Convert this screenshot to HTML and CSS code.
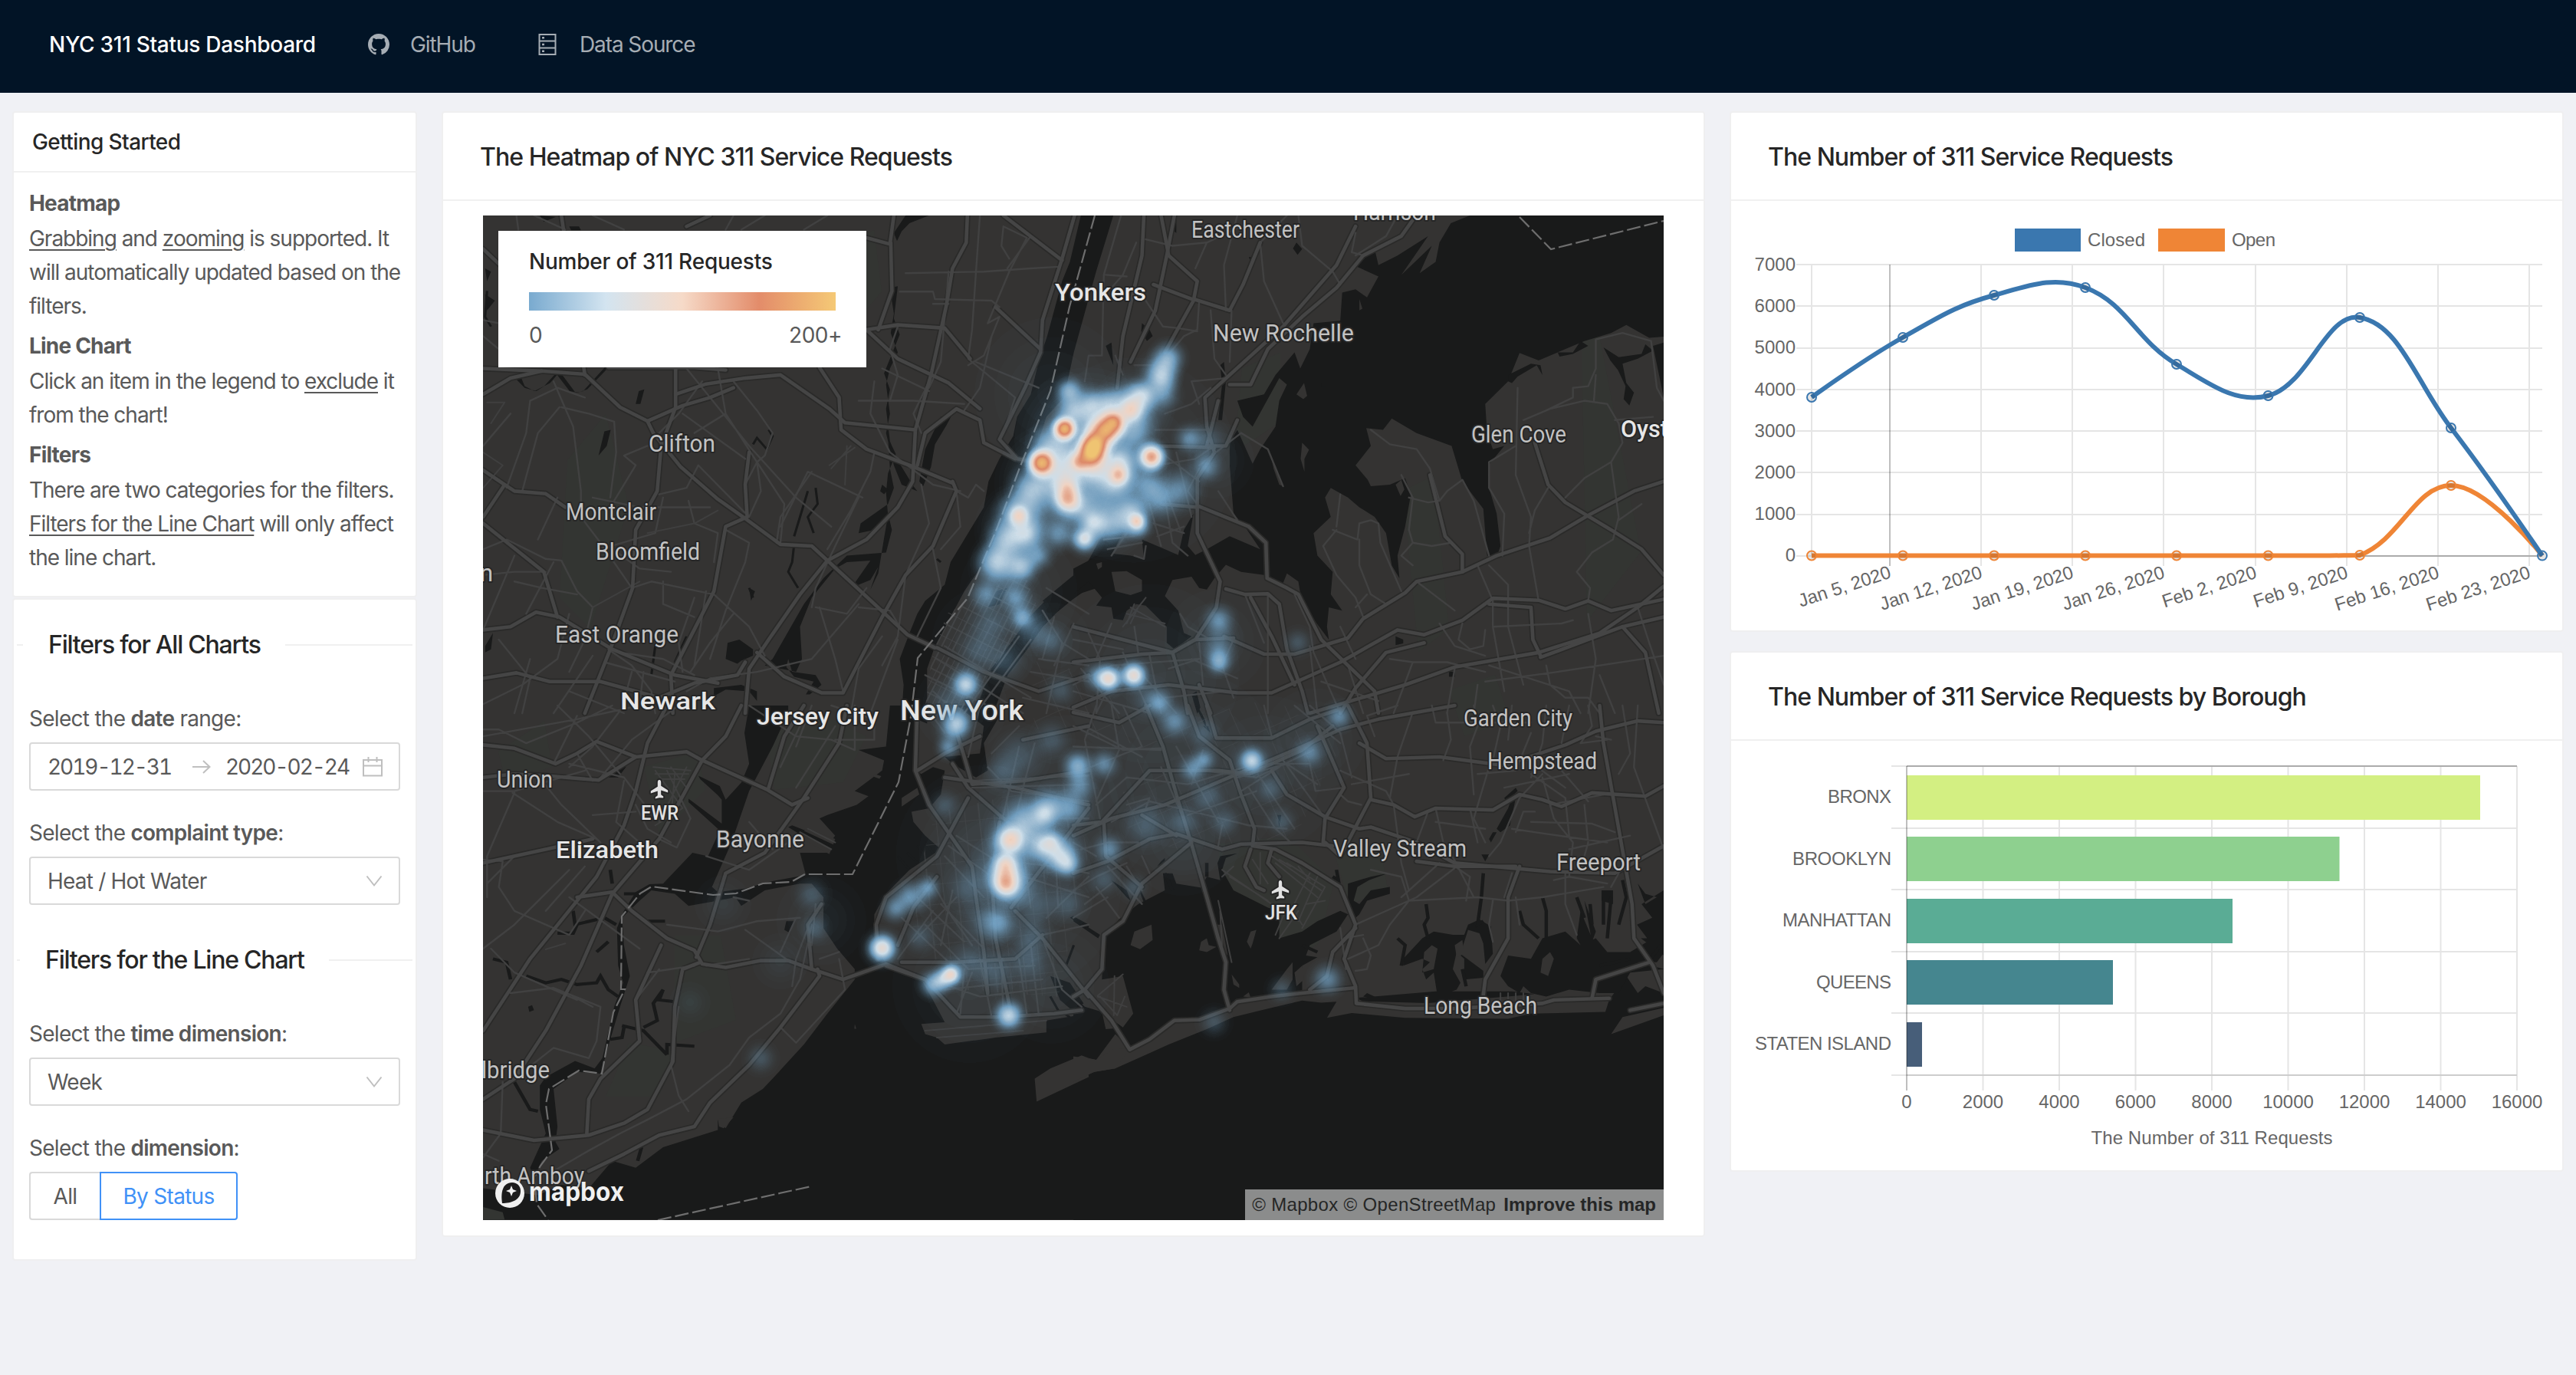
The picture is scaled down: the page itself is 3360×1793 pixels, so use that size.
FILE: index.html
```html
<!DOCTYPE html>
<html lang="en">
<head>
<meta charset="utf-8">
<title>NYC 311 Status Dashboard</title>
<link rel="stylesheet" href="styles.css">
</head>
<body>
<header class="topbar">
  <div class="brand">NYC 311 Status Dashboard</div>
  <a class="nav nav-github"><svg width="28" height="28" viewBox="0 0 16 16"><path fill="currentColor" d="M8 0C3.58 0 0 3.58 0 8c0 3.54 2.29 6.53 5.47 7.59.4.07.55-.17.55-.38 0-.19-.01-.82-.01-1.49-2.01.37-2.53-.49-2.69-.94-.09-.23-.48-.94-.82-1.13-.28-.15-.68-.52-.01-.53.63-.01 1.08.58 1.23.82.72 1.21 1.87.87 2.33.66.07-.52.28-.87.51-1.07-1.78-.2-3.64-.89-3.64-3.95 0-.87.31-1.59.82-2.15-.08-.2-.36-1.02.08-2.12 0 0 .67-.21 2.2.82.64-.18 1.32-.27 2-.27s1.36.09 2 .27c1.53-1.04 2.2-.82 2.2-.82.44 1.1.16 1.92.08 2.12.51.56.82 1.27.82 2.15 0 3.07-1.87 3.75-3.65 3.95.29.25.54.73.54 1.48 0 1.07-.01 1.93-.01 2.2 0 .21.15.46.55.38A8.01 8.01 0 0 0 16 8c0-4.42-3.58-8-8-8z"/></svg><span>GitHub</span></a>
  <a class="nav nav-data"><svg width="24" height="28" viewBox="0 0 24 28" fill="none" stroke="currentColor" stroke-width="2"><path d="M1.5 1h21v26h-21zM1.5 9.5h21M1.5 18.5h21"/><path d="M5 5.3h3M5 14h3M5 22.7h3" stroke-width="2.6"/></svg><span>Data Source</span></a>
</header>

<main class="board">
  <aside class="side">
    <section class="card intro">
      <h3 class="small-head">Getting Started</h3>
      <div class="intro-body">
        <h4>Heatmap</h4>
        <p><u>Grabbing</u> and <u>zooming</u> is supported. It<br>will automatically updated based on the<br>filters.</p>
        <h4>Line Chart</h4>
        <p>Click an item in the legend to <u>exclude</u> it<br>from the chart!</p>
        <h4>Filters</h4>
        <p>There are two categories for the filters.<br><u>Filters for the Line Chart</u> will only affect<br>the line chart.</p>
      </div>
    </section>
    <section class="card filters">
      <div class="divider divider-all"><span>Filters for All Charts</span></div>
      <label>Select the <b>date</b> range:</label>
      <div class="field dates"><span>2019-12-31</span>
        <svg width="24" height="20" viewBox="0 0 24 20" fill="none" stroke="#bfbfbf" stroke-width="2"><path d="M0 10h22M14 2l8.500 8-8.500 8"/></svg>
        <span>2020-02-24</span>
        <svg class="cal" width="26" height="26" viewBox="0 0 26 26" fill="none" stroke="#bfbfbf" stroke-width="2"><path d="M1 4h24v20.500H1zM1 11.500h24M7.500 0v7M18.500 0v7"/></svg>
      </div>
      <label>Select the <b>complaint type</b>:</label>
      <div class="field"><span>Heat / Hot Water</span><svg width="22" height="16" viewBox="0 0 22 16" fill="none" stroke="#bfbfbf" stroke-width="2"><path d="M1.500 1.500l9.500 12 9.500-12"/></svg></div>
      <div class="divider divider-line"><span>Filters for the Line Chart</span></div>
      <label>Select the <b>time dimension</b>:</label>
      <div class="field"><span>Week</span><svg width="22" height="16" viewBox="0 0 22 16" fill="none" stroke="#bfbfbf" stroke-width="2"><path d="M1.500 1.500l9.500 12 9.500-12"/></svg></div>
      <label>Select the <b>dimension</b>:</label>
      <div class="toggle"><button class="opt">All</button><button class="opt on">By Status</button></div>
    </section>
  </aside>

  <section class="card map-card">
    <h2 class="head">The Heatmap of NYC 311 Service Requests</h2>
    <div class="map">
      <svg class="map-svg" viewBox="630 281 1540 1310" width="1540" height="1310">
        <defs>
          <radialGradient id="spot"><stop offset="0" stop-color="#fff" stop-opacity="1"/><stop offset=".2" stop-color="#fff" stop-opacity=".86"/><stop offset=".4" stop-color="#fff" stop-opacity=".56"/><stop offset=".6" stop-color="#fff" stop-opacity=".27"/><stop offset=".8" stop-color="#fff" stop-opacity=".08"/><stop offset="1" stop-color="#fff" stop-opacity="0"/></radialGradient>
          <filter id="ramp" filterUnits="userSpaceOnUse" x="630" y="281" width="1540" height="1310" color-interpolation-filters="sRGB">
            <feColorMatrix values="0 0 0 1 0  0 0 0 1 0  0 0 0 1 0  0 0 0 1 0"/>
            <feComponentTransfer>
              <feFuncR type="table" tableValues=".42 .47 .83 .965 .89 .965 .965"/>
              <feFuncG type="table" tableValues=".62 .67 .895 .855 .55 .79 .79"/>
              <feFuncB type="table" tableValues=".75 .82 .94 .79 .42 .46 .46"/>
              <feFuncA type="table" tableValues="0 .9 1 1 1 1 1"/>
            </feComponentTransfer>
          </filter>
          <pattern id="grid1" width="15" height="30" patternUnits="userSpaceOnUse" patternTransform="rotate(27)"><path class="cell" d="M0 0V30M7 0V30M0 0H15M0 15H15"/></pattern>
          <pattern id="grid2" width="38" height="26" patternUnits="userSpaceOnUse" patternTransform="rotate(-6)"><path class="cell" d="M0 0V26M19 0V26M0 0H38"/></pattern>
          <pattern id="grid3" width="34" height="44" patternUnits="userSpaceOnUse" patternTransform="rotate(-24)"><path class="cell" d="M0 0V44M0 0H34"/></pattern>
          <path id="plane" d="M0-11c1.600 0 2.200 1.600 2.200 3.200v4.600l9 5.800v2.800l-9-2.800v5.600l3 2.400v2L0 12.200l-5.200 1.400v-2l3-2.400V3.600l-9 2.800V3.600l9-5.800v-5.600C-2.200-9.400-1.600-11 0-11z"/>

          <g id="major">
            <g transform="translate(620 270) scale(.5102 .42092)">
              <path d="M20 580L90 530 170 508 280 518 370 620 440 663 530 615 600 590 660 560"/>
              <path d="M512 497V620L475 740 465 880 410 1000 402 1180 345 1370 280 1568"/>
              <path d="M440 663L455 700 525 805 620 905 690 965 780 1045 860 1050 985 1190 1105 1325 1175 1365"/>
              <path d="M880 497L930 590 935 690 1000 750 1110 800 1220 855"/>
              <path d="M690 1568L700 1430 750 1340 830 1200 900 1095 1000 1030 1080 930 1118 850 1125 690 1165 520 1205 300 1220 190 1255 110 1258 26"/>
              <path d="M280 520L220 26M20 130L90 210M512 580L590 548 690 530 780 520 905 625 945 668 1125 690"/>
              <path d="M20 1460L105 1443 190 1470 320 1470 470 1520 560 1475 670 1450 690 1410"/>
              <path d="M20 1310L90 1300 155 1255 215 1270 350 1370 510 1450 620 1475"/>
              <path d="M210 1270L175 1130 20 980M75 860L20 960M20 815L75 860 100 880 180 888 230 930"/>
              <path d="M700 760L690 860 695 960 640 990 610 1190 500 1450 505 1568"/>
              <path d="M1532 26L1500 160 1450 350 1445 450 1405 560 1340 720 1385 780 1430 790M1130 800L1150 700 1230 625 1290 660 1300 730 1380 780"/>
              <path d="M720 1380L790 1455 885 1505 940 1505 1040 1270 1100 1140 1170 1050 1230 880 1220 850M1000 380L1080 470 1210 545 1290 625M1000 380L1080 365 1200 375 1265 470"/>
              <path d="M1350 26L1500 165M1330 310L1445 440M1000 95L1060 115 1070 26M1062 110L1065 260 1030 380"/>
              <path d="M540 60L600 26M340 497L560 497 640 505M20 500L170 508M1180 1365L1300 1440 1440 1500 1568 1450"/>
            </g>
            <g transform="translate(1400 270) scale(.49745 .42092)">
              <path d="M185 26L180 150 130 400 115 560M265 26L245 150 215 320 150 480"/>
              <path d="M230 26L250 150 325 230 315 290 240 450M315 285L410 320 445 240 490 110"/>
              <path d="M210 240L310 285M740 60L690 180 550 370 410 520 345 590 350 680 370 760 325 840 325 1010 385 1160 375 1240 320 1340 260 1380 0 1300"/>
              <path d="M890 40L860 90 760 150 690 250 600 340 510 440 465 550 410 550M380 600L350 740 400 740 430 660"/>
              <path d="M220 740L370 745M325 930L230 920M325 925L460 990 505 1040 508 1150 560 1180 590 1200 650 1340 790 1500 800 1568"/>
              <path d="M400 1183L450 1200 510 1198 540 1230 560 1370 600 1500 615 1568M465 1210L520 1330 580 1480M395 1330L500 1385 580 1385 720 1335 760 1275 870 1195 900 1160 1020 1130 1110 1080 1250 1025 1350 955 1470 880 1548 850"/>
              <path d="M0 1410L180 1385 260 1380 320 1340 420 1335M260 1380L290 1500 300 1568M0 1550L100 1500 250 1480 430 1505 520 1505 700 1410 850 1310 920 1325 1020 1280 1100 1212 1220 1218 1290 1245 1350 1220 1410 1250 1548 1215"/>
              <path d="M1090 1230L1200 1240 1205 1340 1225 1390M620 1568L870 1480 1000 1425 1220 1380 1380 1320 1480 1240 1548 1175M1225 1395L1440 1300 1548 1270"/>
              <path d="M935 830L975 1020 1020 1075V1130M1210 730L1245 860 1290 915 1410 1000 1490 1060 1548 1140M1440 1300L1500 1380 1535 1568"/>
              <path d="M330 1480L360 1568M700 1568L740 1490 820 1380 920 1350"/>
            </g>
            <g transform="translate(620 920) scale(.5102 .44643)">
              <path d="M20 115L100 125 205 170 260 140 310 105 410 150 540 135 580 160 745 245 810 290 850 270"/>
              <path d="M680 0L640 90 580 160 470 390 350 550 270 760 180 950 100 1090 20 1150"/>
              <path d="M490 0L440 110 410 250 380 350 310 500 140 740 20 950"/>
              <path d="M20 210L100 200 180 205 315 218 410 150M20 460L200 415 300 390"/>
              <path d="M260 560L350 545 400 600 490 680 560 715 580 755 640 765 730 745 800 745 860 770 940 800 1050 755 1150 800"/>
              <path d="M640 490L600 640 565 735M640 490L740 430 840 270 930 110 950 0M840 0L790 90 750 240"/>
              <path d="M475 700L410 860 420 980 320 1090 290 1150 285 1250M575 750L530 770 510 880 505 1040 440 1180 380 1220 290 1255 150 1270 20 1240"/>
              <path d="M290 1360L380 1310 470 1255 560 1230 600 1160 700 1050 780 940 860 820 880 790 875 770"/>
              <path d="M860 770L850 640 885 580"/>
              <path d="M1130 0L1125 190 1160 290 1270 470 1280 560 1300 720 1310 840M1130 190L1200 140 1290 90"/>
              <path d="M1220 170L1260 240 1340 320 1450 420M1210 0L1250 150 1270 230 1400 220 1568 190M1260 270L1180 440 1050 560 1025 640 1030 740"/>
              <path d="M1180 500L1120 590 1080 700M1340 340L1320 500 1330 680 1370 900M1050 760L1150 800 1240 910 1340 910 1480 900 1550 890M1380 600L1450 680 1568 850M1200 210L1380 240 1568 290M1400 100L1568 60"/>
              <path d="M1090 750L1230 750 1380 740 1450 670M1370 590L1568 300"/>
            </g>
            <g transform="translate(1400 920) scale(.49745 .44643)">
              <path d="M0 380L100 330 240 290 430 200 600 120 700 70 800 40 1000 0"/>
              <path d="M190 0L235 120 270 260 310 405 350 560 380 680 400 750 395 830 410 890"/>
              <path d="M300 0L330 90 410 160 440 260 475 360 470 410M350 0L375 95 520 95 620 40 700 10"/>
              <path d="M0 350L75 340 200 190 380 190 460 200 600 130 680 60"/>
              <path d="M0 490L90 455 200 390 270 375 390 420 440 405 600 400 680 410M270 380L180 320M310 400L180 520 130 630 80 670 75 770 30 830 0 850"/>
              <path d="M720 0L770 110 780 270 700 440 660 400M640 60L710 240 660 330 655 400M520 190L560 260 660 325 750 360 780 355 900 400 1000 460 1250 485 1420 490 1548 410"/>
              <path d="M750 110L820 155 960 150 1130 175 1290 115 1370 75 1480 45 1548 50M780 275L840 290 895 325 950 300 1100 305 1170 260 1230 275 1280 295 1360 255 1500 265 1548 235"/>
              <path d="M1380 0L1390 110 1430 360 1465 580 1470 680 1520 760 1548 840M1170 470L1140 560V680L1080 800 1075 845M900 455L1000 470 1160 470"/>
              <path d="M470 410L530 420 600 460 700 530 740 640 710 740 740 820 742 870 870 885 1000 885 1230 870 1260 860 1405 855"/>
              <path d="M465 420L450 470 480 530 500 540M520 420L510 460 540 500M30 830L100 920 148 1005 200 975 265 920 330 918 410 885 430 865 520 850 600 840 735 825M620 830L665 790 680 720 740 650"/>
              <path d="M1360 855L1370 800 1510 750M1460 890L1548 870M80 340L85 440 180 530M0 20L120 50 200 0"/>
            </g>
          </g>

          <g id="minor">
            <g transform="translate(620 270) scale(.5102 .42092)">
              <path d="M105 26L110 70M150 26L230 70M300 26L380 70M660 26L640 70M740 26L680 70M840 70L900 26M20 350L60 360M20 400L60 440M220 620L290 640 355 665 360 760 345 900M90 640L20 740M140 600L210 560 280 590M140 600L130 700 80 870M215 620L160 700 120 880M200 540L250 680 270 880 270 960 320 1040 400 1180"/>
              <path d="M540 500L600 590 700 740 820 900 910 990M580 540L520 640 470 700M530 640L690 780M620 500L640 640 720 790 730 880 700 960M660 540L720 630 760 700 740 770 720 790M640 640L560 700M570 800L540 870 470 890M570 800L700 960M690 860L720 790 790 920 780 1040M860 820L780 960 770 1040M440 740L380 770 410 800 350 920M300 900L420 930 600 930M545 910L560 980 620 1010 610 1100"/>
              <path d="M20 1060L80 1030 180 1090 220 1095 260 1190 300 1240 280 1340 240 1440M100 1080L20 1310M200 1100L130 1260M160 1030L210 900M340 1050L420 1120 500 1130M480 1160L480 1230 560 1270M20 1140L100 1130 180 1130M100 1160L170 1180 260 1200M320 1060L460 1010 480 900M400 1180L450 1160 610 1200 700 1300 740 1390M560 1210L520 1350 530 1440M590 1190L560 1420M640 1000L700 1040 690 1100 640 1250 600 1400M660 1260L600 1350 550 1440"/>
              <path d="M340 1370L400 1420 450 1500 460 1568M370 1380L480 1400 560 1450M330 1410L510 1470M400 1440L380 1530M430 1440L420 1540M300 1390L200 1568M240 1500L380 1568M60 1340L140 1460 120 1568M20 1540L120 1480 210 1400 240 1260M140 1400L100 1568M540 1500L600 1460 720 1440 860 1400 980 1230M860 1240L870 1180 920 1050 980 900M870 1240L950 1260 1000 1180M900 1060L960 940 1010 820 1020 760M990 900L850 820 780 990M1020 540L1010 640 1060 760 1170 860 1240 880M1040 500L1160 570M980 600L1120 600 1250 610M1160 540L1120 640 1140 700"/>
              <path d="M1100 205L1300 200 1420 190 1490 185M1085 262L1170 262 1175 285 1320 290 1340 310M1170 300L1210 300M1210 200L1190 480 1160 560M1290 26L1280 200 1270 380 1260 470 1380 590 1350 700M1080 370L1060 440 1080 520 1060 600M1320 400L1290 560 1250 630M1365 160L1345 120 1350 60 1410 95 1365 200 1310 360 1340 340 1300 460 1260 490M1420 90L1360 190M1280 480L1440 560M1230 880L1260 900 1280 860 1300 880M1140 860L1160 980 1100 1140 1080 1330 1040 1420M1170 1060L1190 1180 1130 1330M1080 1340L1010 1568M1040 1330L980 1430 960 1568M980 1240L1060 1250 1080 1290M880 1240L920 1400 940 1500M1230 880L1240 990 1190 1060"/>
              <path class="dim" d="M20 870L70 800 20 760M960 740L910 810M950 740L945 860M970 745L905 800M30 605L75 605 40 670M440 1010L560 980 620 940M300 1240L420 1160"/>
              <path d="M1180 1400L1400 1568M1200 1360L1420 1520M1150 1450L1350 1568M1170 1500L1230 1568M1390 1330L1250 1568M1420 1340L1280 1568M1450 1250L1500 1350 1568 1400M1440 1400L1568 1420M1420 1440L1568 1470M1480 1270L1450 1400M1530 1290L1480 1420M1460 1180L1568 1260M1500 1350L1460 1568M1400 1520L1568 1568"/>
            </g>
            <g transform="translate(1400 270) scale(.49745 .42092)">
              <path d="M125 26L80 210 75 460M165 110L130 210 100 250M350 110L320 190M430 26L395 180 400 320M560 26L490 110 500 230 550 360M590 26L600 120 680 200 700 240M850 26L820 90 740 150M740 80L730 140 760 150M190 290L235 370 275 375 325 385M160 490L215 490 220 470M75 460L40 460 30 540M110 460L130 520M330 290L325 380 290 400 240 470M360 320L370 470 400 520M415 320L410 480M440 60L350 110 260 120 190 100M85 210L140 215"/>
              <path d="M310 540L400 530M310 540L330 610M240 640L310 610 360 560M215 690H360M230 760L330 850M220 800L320 780 370 740M240 870L280 1000M270 760L310 960M330 800L440 700 510 750 550 865M330 810L300 880 330 930M380 880L430 970M80 1030L160 1020M90 1060L180 1040M100 1080L140 1010M200 920L230 1050M240 900L260 1040 300 1080M210 980L290 1010M220 1020L290 990M160 1080L185 1090 190 1050"/>
              <path d="M780 690L830 735 900 750 935 810 960 910M880 900L930 915 960 910 980 880 1020 845 1050 910 1090 1080M860 830L890 900 880 1000 890 1040 860 1080 890 1110M680 1000L745 1030 750 980 780 970 800 980 805 1040 860 1190M690 1000L655 1050 690 1140 740 1210 760 1270M750 1030L750 1110 780 1200 820 1230M700 890L690 990M890 1040L940 1050 990 1040M770 1200L740 1240"/>
              <path d="M1090 790L1090 870 1130 950 1125 1080M1160 740L1090 790M1165 560L1160 830 1200 960 1195 1050 1220 1220M1180 660L1250 625 1340 600 1400 610 1430 670 1440 730 1410 790 1340 840 1290 900M1240 630L1310 590 1310 560 1350 555 1370 500 1370 410 1440 390 1515 415M1245 870L1210 940 1195 1010M1410 790L1430 960 1415 1030 1360 1070 1320 1130 1355 1180 1350 1220M1430 970L1490 920M1515 415L1530 560 1548 600M1370 520L1365 600M1420 660L1520 650"/>
              <path d="M1060 1110L1100 1220 1100 1300 1130 1500M1090 1110L1140 1170 1140 1300 1180 1480M900 1160L1000 1250M1020 1290L1010 1340 1040 1370 1075 1360 1080 1310M1100 1300L1280 1290 1310 1280M830 1400L890 1410 980 1410 1080 1440M890 1410L840 1568M1000 1430L980 1568M1060 1480L1050 1568M1090 1420L1300 1500 1330 1568M1080 1470L1270 1440 1548 1390M1350 1260L1370 1400 1350 1568M1380 1450L1420 1568M1480 1240L1510 1350 1548 1480M1240 1420L1250 1480 1290 1520 1350 1520 1380 1568M700 1300L740 1400M620 1360L640 1568M580 1200L620 1300 630 1380 700 1568M510 1200V1568M450 1200L500 1350M720 1420L760 1568M650 1470L800 1530M960 1290L1000 1360 1080 1390"/>
              <path d="M0 1340L130 1370M40 1320L70 1400 60 1568M100 1290L60 1400M130 1380L200 1568M160 1300L170 1380M0 1480L100 1420 330 1400M20 1430L120 1568M120 1420L60 1568M160 1420L270 1568M200 1390L230 1568M330 1350L340 1480M280 1260L300 1300 360 1340M310 1400L430 1460M420 1340L390 1420 420 1520M0 1500L200 1568M250 1430L330 1400M240 1520L400 1500"/>
              <path class="dim" d="M130 1300L190 1210M150 1240L240 1300M140 1260L240 1290M160 1230L140 1290M170 1240L150 1290"/>
            </g>
            <g transform="translate(620 920) scale(.5102 .44643)">
              <path d="M20 70L60 70 130 110 260 50 350 0M20 90L260 40 420 0M210 0L290 90 370 200M200 170L260 30M260 140L300 220M20 250L100 250 280 190M100 255L30 440 30 560M95 255L210 340 310 390M160 205L220 290 320 400M315 218L400 100 520 0M240 170L380 210 440 300M380 220L360 340 420 400M410 290L440 360 500 400M300 320L410 310M380 0L300 120 240 180M520 260L550 330 515 415 470 390M20 450L70 455 60 530 100 600 240 670M30 520L100 440M280 470L180 600M280 600L240 670M240 560L420 710M20 710L100 640 240 480M40 710L100 780 260 860M90 840L200 825 320 880 310 980 290 1030 200 1000 100 1090M250 850L300 880M70 1100L65 1250 20 1320M20 1310L60 1330"/>
              <path d="M490 640L620 660 720 630 830 620M660 560L700 570M690 655L770 720 800 745M820 620L780 720M440 780L560 760M410 860L470 770M590 760L700 740M860 640L830 800 780 900 700 970 650 1050 540 1150 440 1210 370 1250 290 1300 200 1360M850 650L820 740 810 820M880 740L930 720M930 740L945 830 820 985 780 940M870 580L860 700M520 880L500 1050 520 1140 545 1185"/>
              <path d="M700 0L820 90 910 100 970 130 970 0M830 60L780 180M860 0L820 120M920 60L820 240M910 0L1020 40 1020 100 920 100M590 440L700 480 800 400M700 340L760 420"/>
              <path d="M1150 0L1200 80M1290 0L1260 150M1320 140L1390 60M1310 180L1370 250 1568 280M1260 220L1568 205M1270 240L1568 230M1340 330L1568 330M1210 410L1370 540M1230 380L1340 460M1200 440L1300 560M1160 500L1220 620 1270 700M1130 560L1250 690M1120 690L1230 560M1080 740L1170 600M1090 620L1220 760M1150 640L1260 770 1430 760M1190 580L1300 710M1220 540L1190 700M1160 800L1290 850 1500 820M1200 830L1450 800M1250 770L1240 900M1230 900L1270 780M1290 740L1320 910M1345 740L1350 910M1390 740L1410 900M1420 700L1440 900M1450 680L1500 830 1550 880M1400 460L1480 470 1568 490M1460 620L1568 500M1350 480L1568 560M1390 330L1420 590M1360 330L1380 560M1480 360L1490 590M1568 640L1450 670M1390 120L1350 320M1430 110L1380 330"/>
              <path class="dim" d="M455 180L550 190M460 190L530 300 460 350M490 190L520 260M510 200L500 330M500 180L540 240M540 180L470 340M180 712L230 695M460 200H545M475 215H535M1150 950L1460 920M1180 970L1400 950M850 360L920 400M830 370L910 420"/>
            </g>
            <g transform="translate(1400 920) scale(.49745 .44643)">
              <path d="M0 60L130 130 230 125M0 120L230 130M60 0L30 100 70 330M100 0L120 130 60 280M130 0L180 120 0 200M30 60L180 150M60 290L140 210 300 230 480 170M100 340L200 280 350 320 460 350 560 360M300 320L480 250M140 290L200 270 190 300M230 180L300 360M270 120L380 340M340 130L310 230M340 190L480 210 630 130M390 350L380 410M430 210L560 170 640 230M440 250L540 180M460 240L530 360 570 400M490 210L580 360M550 160L660 330M480 170L620 170 635 250 710 240M700 190L820 250 840 290M620 0L700 80 730 210M730 230L880 200M790 90L770 30 850 0M700 260L720 280 755 290M500 0L520 90M580 0L700 110"/>
              <path d="M890 20L850 150 830 270M940 0L950 50 1010 50M980 20L990 100 970 160M1050 0L1060 60 1040 120 1050 260M1100 0L1120 60 1100 160M1150 0L1140 100M1010 50L1200 50M1060 200L1160 190 1200 80M1090 180L1050 330 1080 400M1230 200L1170 270 1120 400 1090 440M1200 200L1290 270 1300 380M1280 190L1350 280M1230 210L1260 330 1310 400 1300 500M1240 0L1230 110 1200 210M1300 0L1280 110M1350 0L1360 60 1330 110 1400 100M1370 90L1410 100M1180 150L1290 240M1440 0L1460 140 1430 200M1480 0L1470 180 1548 420M1150 360L1240 375 1400 400M1160 370L1180 310 1210 310M1340 290L1350 400 1330 480M1080 360L950 340M950 300L970 400 1010 470M930 310L900 400M840 290L860 460 880 540M1040 300L1060 400M1200 340L1360 345 1420 370M1250 290L1390 260M1300 420L1460 380M1130 240L1300 200"/>
              <path d="M780 480L820 490 860 500 880 570 830 640 800 700 720 740M1000 475L900 560 740 640M960 460L860 560M1000 470L1040 500 1030 570M1010 475L1050 560M1150 490L1130 560M880 570L1060 560 1140 570 1230 560 1390 530M1290 490V580L1320 670M1430 490L1410 530M1160 560L1170 640M1100 570L1090 640 1100 690M1260 510L1300 500 1400 520M700 650L715 770M760 680L780 730 770 770 740 775M710 680L760 670"/>
              <path d="M0 540L60 500 140 460M30 580L100 520M90 470L180 580M60 530L120 620M140 470L180 540M0 620L90 560M0 400L60 440M20 420L90 400 170 400M180 440L200 490"/>
              <path class="dim" d="M390 480L520 580M410 500L510 570M520 440L650 540M530 460L640 560M540 450L570 470M560 460L660 530 600 650M590 470L620 510M640 500L590 630M620 490L570 600M610 580L660 570M570 590L600 640M590 600L540 680M560 590L530 670M420 470L390 500M470 450L510 520M490 430V520M64 848L130 785M108 790L106 905M64 850L140 880M70 850L115 905 135 850M380 570L415 750M385 600L390 700M1120 840V870M1140 840V870M1160 840V870M1180 840V870"/>
            </g>
          </g>
        </defs>

        <rect class="land" x="630" y="281" width="1540" height="1310"/>
        <g class="park">
          <path d="M740 600l50-60 30 120-50 160-40-40zM1080 330l60-30 10 80-50 60zM1620 480l50-20 0 90-60 40zM1830 640l40-20 20 200-40 30zM1590 1100l90-10 60 60-20 80-60 40-70-60zM880 1220l60 0 20 110-80 30zM1000 960l70-30 60 30-30 60-90 10zM840 1000l70-20 10 50-60 60zM2060 300l80 420-70 90zM1740 1110l60-10 10 60-50 20zM1890 900l60-20 20 60-60 20zM650 980l60-40 10 60-60 20zM820 1360l60 10-20 60-70 0z"/>
        </g>

        <g class="water">
          <g transform="translate(620 270) scale(.5102 .42092)">
            <path d="M1548 26L1520 170 1500 230 1462 400 1440 480 1420 580 1385 650 1375 710 1340 780 1312 850 1300 930 1250 1030 1215 1100 1200 1170 1150 1220 1130 1260 1110 1320 1085 1400 1095 1480 1090 1568 1155 1600 1155 1430 1175 1360 1215 1270 1250 1190 1290 1120 1340 1000 1380 900 1425 780 1460 650 1505 590 1530 450 1587 200 1631 26z"/>
            <path d="M1090 75L1110 50 1160 26 1100 26 1070 80 1078 105zM410 610l8-40 14-5-10 45zM315 770l15-75 16-5-10 50zM116 525l10 30 25 15 40-25 25-35 40 65 20-5 60-80 10 0-60 75-25 10-20-5-35-55-30 40-20 15-30-10-20-25zM1060 250l10 80-8 60 18 60-20 50-10 50 10 90-10 60 20 100 20 60 40 20-10-15-40-80-20-60-10-100 10-60-15-50 20-60 20-60-15-50 10-100zM1220 640l-30 10-40 100-15 100 10 15 20-60 10-70 30-60zM1060 810l10 60-15 50-70 60-5 30 40-10 35-50 10 50-15 70-100 10-60 70-50 80-80 170-20 20 80 20 15-40-5-100 30-90 60-90 30-20 60-5-40 70 0 10 40-20 20-40-20 70 20-50 15-110 10-70-5-70 5-60 20-60-20-50zM645 1350l30-10 35 30 0 20-30 15-10 10-30-15zM800 1400l10 40 60 10 15 30-30 30-10 0 20-40-50-15-20-30zM610 1490l70-10 40 20 0 30-20-30-60-5-30 20zM700 1180l15 10-10 30z"/>
            <path d="M165 26l10 20 30-15zM240 60l25 0 5 12-25 0zM25 270l25 20-20 30zM25 190l15 10-10 30zM25 1360l20-40-5 50-15 10zM1040 860l15 15-10 15-10-10z"/>
            <path class="thread" d="M815 1045L810 1100 800 1130 825 1180M850 880l-20 80-15 60M870 870L875 920 850 960 865 1010M700 1180l10 30M710 735l10-20 25 35 15-40-10-20M1180 1090l10 10M30 260l-5 80 15 30M540 1330l-30 80M460 1360l-10 90"/>
            <path class="harlem" d="M1640 990L1568 1150 1510 1200 1470 1240 1430 1290 1390 1360 1340 1440 1300 1568"/>
            <path d="M1330 1190l30-10-20 50-30 10zM1450 1220L1560 1110 1640 1080 1640 1160 1540 1200 1490 1250z"/>
          </g>
          <g transform="translate(1400 270) scale(.49745 .42092)">
            <path d="M1040 26L1568 26V400L1510 405 1450 365 1410 390 1340 415 1270 450 1220 475 1170 452 1140 540 1080 610 1085 700 1100 750 1130 740 1088 800 1090 870 1110 950 1120 1050 1110 1085 1085 1080 1075 935 1020 850 992 740 900 700 835 655 812 690 768 685 780 740 740 800 772 845 780 865 830 860 870 840 885 890 870 990 850 1080 855 1150 835 1110 820 1010 790 960 750 930 720 900 675 870 660 900 675 960 630 1010 640 1080 680 1130 675 1200 705 1250 670 1240 665 1300 670 1340 600 1230 590 1160 560 1135 545 1180 500 1140 440 1130 400 1108 370 1150 350 1185 330 1180 310 1145 260 1155 240 1205 275 1250 290 1320 310 1330 265 1370 245 1350 245 1300 190 1235 165 1230 140 1250 130 1280 105 1275 100 1240 60 1235 75 1210 40 1160 0 1200V1120L80 1070 150 1080 185 1090 180 1030 220 1050 275 1078 290 1000 315 950 300 1050 320 1078 350 1060 410 1020 490 1060 450 990 420 950 410 800 410 730 430 690 470 795 490 750 530 680 540 600 560 550 540 530 470 680 445 650 430 600 500 580 530 520 580 450 595 500 620 440 630 360 700 352 705 265 740 255 770 280 800 215 735 180 790 130 800 180 850 150 930 90 860 210 940 120 908 205 950 170 960 110 990 50z"/>
            <path d="M180 360l20 20 8 20-15 15-15-30zM585 110l15 20-12 18-12-20zM460 155l15 0-8 18zM85 430l20 60-5-70zM395 480l5 60-10 120-10 0 10-110-5-60zM1390 435l40 30 60-10 10-30 20 20-40 25-40 15 10 60 20 30-12 40-15-20 5-40-20-50-20-30zM1140 520l60-35 25 5 5 30-15-30-50 35-15 20-10-5zM1270 450l40 0 20-35 20 15-40 25-35 8zM845 1330l20 10 0 12-20 5zM985 1440l15 0 0 15-15 0zM310 1510l15 60 8-20-10-50zM650 545h12v10h-12zM262 40l8 0 0 40-6-5zM1520 430l28 160v-170z"/>
          </g>
          <g transform="translate(620 920) scale(.5102 .44643)">
            <path d="M700 0L688 80 700 170 680 225 640 275 625 235 570 205 575 215 620 262 630 275 630 345 545 272 545 282 625 365 595 440 555 430 480 520 445 522 410 545 380 600 362 650 365 760 378 810 355 880 325 1030 305 1060 255 1038 180 1085 165 1110 165 1180 180 1250 160 1300 140 1350 150 1380 170 1330 215 1295 205 1275 210 1230 200 1120 260 1070 320 1075 345 975 370 880 395 790 380 700 375 620 420 570 450 540 510 550 545 585 620 570 665 560 680 585 740 540 830 520 860 520 890 560 890 650 925 710 970 770 970 800 900 900 840 990 760 1090 735 1120 680 1160 640 1235 620 1210 620 1240 480 1290 410 1350 350 1330 290 1410 220 1400 160 1430 20 1410 20 1502 1568 1502V900L1460 920 1460 955 1330 970 1200 990 1180 970 1150 960 1140 930 1200 925 1170 860 1140 800 1050 760 1020 680 1020 610 1050 550 1110 480 1190 420 1150 380 1120 340 1115 310 1160 300 1190 260 1200 190 1170 180 1140 200 1125 190 1135 0H1060L1050 120 980 130 1045 160 1040 190 970 250 1005 265 975 290 900 320 880 330 920 380 910 395 810 350 800 355 905 430 830 430 845 495 750 515 690 535 620 545 605 530 655 400 700 250 760 120 800 20V0z"/>
            <path d="M1230 0L1300 0 1340 30 1300 110 1310 190 1280 210 1220 170 1200 150 1290 140 1300 60zM340 210l40-40 5 10-20 30zM795 630l20 0-10 35-15-10zM1520 620l48 30V640l-40-25zM1470 790l50 20 35 60-30 20-30-30zM135 880l10-5 5 15-12 5z"/>
            <path class="thread wide" d="M375 935L430 950 490 1020M130 790L180 810 220 800 260 815 310 810 320 790 340 830 365 850M345 975L375 970 380 940M430 940L465 920 455 870 480 830 470 860 510 865M490 1020L490 990 560 995M250 600L255 640 330 620 360 640M210 665L250 665 260 640M380 550L410 550M440 630L485 630M345 480L350 520M45 740L80 750 90 800M100 1100L140 1180 160 1185M425 1290L415 1330M310 720L340 690"/>
            <path class="thread" d="M1110 480L1080 440M1130 460L1105 430M1150 440L1130 410M1170 430L1150 400M1470 850l20 40 30 20M1530 700l-20 60 30 60"/>
          </g>
          <g transform="translate(1400 920) scale(.49745 .44643)">
            <path d="M0 850L30 880 75 895 85 945 140 940 150 1005 110 960 60 1035 0 1020zM120 625L170 580 240 540 235 490 260 490 270 520 335 532 350 500 385 510 378 460 385 440 430 432 400 445 390 480 420 540 510 590 540 600 540 680 600 660 640 630 700 600 720 610 690 660 620 700 610 730 640 735 600 760 600 830 580 850 500 850 420 870 330 915 265 920 200 975 148 1005 100 920 80 900 130 940 157 900 130 790 75 800 80 670z"/>
            <path d="M0 1098L55 1070 110 1060 200 1015 250 990 350 945 420 910 500 888 600 862 650 868 690 865 665 912 730 898 870 912 1140 915 1200 900 1395 895 1405 860 1450 790 1480 840 1500 820 1560 845V880L1440 910 1410 960 1560 900V1510H0z"/>
            <path d="M0 620l70 50-5 10-65-50zM720 520l60-20 45-10-50 20-30 20-10 40 15 10 30-40 50-10 0 20-60 20-20 40-20 20-10-20zM865 740l50-60 30-20 50 10 30 0 10-30 30-15 30 20 5 80-20 30-5-60-10-30-30-10-20 70 60 50 0 20-50 5 0-60-20-20-10 50 20 40-10 20-50 20-10-70-20 20-10-30 20-20-20-10-50 20zM940 700l-20 20-5 60 30-10 10-60zM1120 790l20-60 60 10 30-60 60-20 40 40 40-20 30 40 60 0 60-40 30 40-20 30-50 0 70 20-90 10-30 60-50 0-80-10-60 20-40-10-20-20-10 20-30-20zM1330 600l30 80-10 60-30-60zM1340 570l30 90-10 30zM1385 540l30 0 0 40-30-10zM1490 580l58-40v140l-30 20-40-60 40-20zM1480 520l20 60 30-20-30-10zM1548 730l-60-50 60 0zM1320 700l60 10 80 60-40 10-50-30zM950 835l200 0 60 8-60 6-220 20-170-5-20-10 60-5zM770 840l40 20-50-10zM230 455l10-10 0 10-20 15zM100 510l40 30 10 30-10-10zM150 480l40 90-5 5zM535 320l10 0-5 35zM1110 360l30-60 10-30 10 0-15 80-25 20zM1130 270l30-30 5 10-30 30zM1090 390l10-20 10 0-15 30zM1070 435l20 0-10 20zM340 60l20 20-5-20zM330 10l15 30 5 30-30-70zM220 460l20-8"/>
            <path class="thread wide" d="M925 580L930 620 920 640 930 680M1075 490L1070 560 1060 640 1075 630M1230 560L1240 600 1240 680M1170 600L1180 640 1220 680M1320 560L1340 620M1355 580L1360 640M1390 560V640M1410 560L1400 680M1440 510L1450 560 1430 640M850 680L870 700 860 760M690 480L695 510 680 500M350 460L350 500M1020 770L1030 820M1460 740L1380 760M1500 760L1540 700M240 490L260 540M600 700L640 720"/>
          </g>
        </g>

        <g class="land">
          <g transform="translate(1400 270) scale(.49745 .42092)">
            <path d="M100 1130L140 1128 180 1155 180 1190 150 1202 110 1190zM585 580l20-35 8 40-10 10zM600 730l18 22-12 28 0 40-10-40zM520 780l30 85-10-5-15-50zM750 285l8 30-8 5zM845 860l15-15 8 30-10 20zM60 1105l15-5 0 15-10 8z"/>
          </g>
          <g transform="translate(620 920) scale(.5102 .44643)">
            <path d="M1090 270l40-30 5 20-45 35zM1430 1090L1470 1060 1550 1022 1568 1030 1568 1085 1435 1157zM620 1208l40-5-25 32-12-5zM850 360l70 30-5 16-75-40zM835 375l75 45-5 14-75-48zM1020 200l18 6-5 8-15-6zM970 930l4 14-5 0z"/>
            <path class="park" d="M20 1465L70 1480 75 1502H20z"/>
          </g>
          <g transform="translate(1400 920) scale(.49745 .44643)">
            <path d="M150 700L160 660 205 640 208 685 175 712zM335 690l15-10 5 20 20 5-25 15-20-5zM455 690l10-30 15-5-10 40-5 15zM520 830l40-60 15-20 0 50-15 30zM580 780l20-20 5 40-20 20zM415 785l20 30 0 10-15-10zM445 850l15-12 5 15zM370 640l20 0 15 90-15-20zM1000 700l20-15 5 40-20 10zM1230 740l20-20 10 20-15 50-20-10z"/>
            <path d="M0 1025L60 1035 110 1000 148 1005 110 1060 55 1070 0 1098z"/>
          </g>
        </g>

        <path fill="url(#grid1)" d="M1235 800L1335 745 1352 790 1290 880 1250 935 1205 935 1215 860z"/>
        <path fill="url(#grid2)" opacity=".6" d="M1220 1060L1390 1020 1420 1110 1380 1300 1250 1290 1180 1200z"/>
        <path fill="url(#grid3)" opacity=".6" d="M1500 950l160-40 90 60-60 120-150 20-90-40zM1340 860l140 30 0 80-130-20z"/>

        <g class="casing"><use href="#major"/></g>
        <g class="thin"><use href="#minor"/></g>
        <g class="thick"><use href="#major"/></g>

        <g class="border">
          <path d="M1428 281L1395 400 1370 510 1330 610 1300 690 1262 780 1197 858 1188 935 1172 1020 1112 1140H1050L1032 1150 995 1152 960 1165 930 1167 850 1156 835 1165 811 1195 810 1290 815 1290 800 1320 785 1400 755 1396 716 1420 712 1440 720 1500 705 1520 697 1535 700 1570 715 1591"/>
          <path d="M1982 283L2023 325 2170 288M858 1591L1058 1547"/>
        </g>

        <text class="city big under" x="1174" y="939" textLength="161" lengthAdjust="spacingAndGlyphs">New York</text>

        <g filter="url(#ramp)" opacity=".97">
          <g transform="scale(2.14286)" fill="url(#spot)">
            <g fill-opacity=".02">
              <circle cx="600" cy="390" r="42"/><circle cx="585" cy="430" r="36"/><circle cx="620" cy="360" r="46"/><circle cx="690" cy="280" r="80"/><circle cx="640" cy="240" r="60"/><circle cx="700" cy="410" r="70"/><circle cx="640" cy="390" r="30"/><circle cx="620" cy="540" r="80"/><circle cx="600" cy="520" r="70"/><circle cx="650" cy="490" r="70"/><circle cx="720" cy="470" r="80"/><circle cx="770" cy="470" r="60"/><circle cx="740" cy="390" r="40"/><circle cx="590" cy="600" r="60"/><circle cx="640" cy="600" r="45"/><circle cx="720" cy="510" r="45"/><circle cx="800" cy="450" r="40"/><circle cx="500" cy="560" r="35"/><circle cx="420" cy="610" r="16"/><circle cx="440" cy="550" r="22"/><circle cx="475" cy="585" r="22"/><circle cx="740" cy="280" r="30"/>
            </g>
            <g fill-opacity=".14">
              <circle cx="662" cy="268" r="46"/><circle cx="642" cy="294" r="38"/><circle cx="680" cy="288" r="34"/><circle cx="622" cy="322" r="30"/><circle cx="672" cy="312" r="30"/><circle cx="690" cy="248" r="26"/><circle cx="612" cy="344" r="24"/><circle cx="706" cy="226" r="16"/><circle cx="613" cy="530" r="26"/><circle cx="626" cy="506" r="30"/><circle cx="646" cy="520" r="20"/>
            </g>
            <g fill-opacity=".06">
              <circle cx="603" cy="380" r="18"/><circle cx="596" cy="396" r="18"/><circle cx="624" cy="376" r="18"/><circle cx="612" cy="402" r="18"/><circle cx="580" cy="428" r="20"/><circle cx="640" cy="390" r="14"/><circle cx="645" cy="420" r="14"/><circle cx="790" cy="391" r="12"/><circle cx="797" cy="458" r="14"/><circle cx="797" cy="458" r="12"/><circle cx="773" cy="480" r="12"/><circle cx="697" cy="502" r="20"/><circle cx="720" cy="500" r="14"/><circle cx="735" cy="485" r="14"/><circle cx="745" cy="500" r="12"/><circle cx="780" cy="500" r="12"/><circle cx="780" cy="602" r="12"/><circle cx="739" cy="622" r="13"/><circle cx="494" cy="544" r="14"/><circle cx="496" cy="565" r="12"/><circle cx="575" cy="490" r="13"/><circle cx="590" cy="540" r="18"/><circle cx="600" cy="560" r="20"/><circle cx="630" cy="550" r="20"/><circle cx="626" cy="585" r="18"/><circle cx="605" cy="590" r="18"/><circle cx="590" cy="585" r="16"/><circle cx="628" cy="570" r="16"/><circle cx="650" cy="550" r="16"/><circle cx="672" cy="535" r="14"/><circle cx="690" cy="540" r="12"/><circle cx="620" cy="460" r="22"/><circle cx="610" cy="470" r="16"/><circle cx="640" cy="450" r="16"/><circle cx="732" cy="446" r="14"/><circle cx="700" cy="425" r="16"/><circle cx="742" cy="388" r="16"/><circle cx="630" cy="385" r="16"/><circle cx="560" cy="545" r="14"/><circle cx="735" cy="268" r="16"/><circle cx="560" cy="570" r="14"/><circle cx="463" cy="644" r="13"/>
            </g>
            <g fill-opacity=".13">
              <circle cx="808" cy="596" r="14"/><circle cx="742" cy="377" r="13"/><circle cx="742" cy="399" r="13"/><circle cx="742" cy="404" r="10"/><circle cx="815" cy="436" r="12"/><circle cx="715" cy="439" r="14"/><circle cx="706" cy="428" r="12"/><circle cx="726" cy="468" r="12"/><circle cx="733" cy="462" r="10"/><circle cx="672" cy="465" r="12"/><circle cx="657" cy="478" r="14"/><circle cx="652" cy="492" r="16"/><circle cx="553" cy="546" r="14"/><circle cx="545" cy="553" r="12"/><circle cx="565" cy="540" r="10"/><circle cx="608" cy="562" r="16"/><circle cx="624" cy="500" r="20"/><circle cx="640" cy="490" r="18"/><circle cx="675" cy="517" r="13"/><circle cx="600" cy="362" r="14"/><circle cx="618" cy="364" r="14"/><circle cx="622" cy="376" r="10"/><circle cx="734" cy="284" r="13"/><circle cx="724" cy="267" r="12"/><circle cx="718" cy="298" r="18"/><circle cx="706" cy="305" r="16"/><circle cx="700" cy="296" r="16"/><circle cx="684" cy="318" r="16"/><circle cx="672" cy="320" r="16"/><circle cx="645" cy="325" r="14"/><circle cx="690" cy="262" r="18"/><circle cx="708" cy="240" r="14"/><circle cx="632" cy="338" r="12"/><circle cx="588" cy="415" r="14"/><circle cx="580" cy="444" r="14"/><circle cx="577" cy="455" r="10"/><circle cx="668" cy="412" r="12"/><circle cx="614" cy="618" r="14"/><circle cx="762" cy="463" r="14"/>
            </g>
            <g fill-opacity=".2">
              <circle cx="762" cy="463" r="10"/><circle cx="588" cy="417" r="11"/><circle cx="583" cy="440" r="12"/><circle cx="711" cy="218" r="14"/><circle cx="707" cy="230" r="14"/><circle cx="656" cy="466" r="13"/><circle cx="651" cy="238" r="12"/><circle cx="664" cy="246" r="14"/><circle cx="676" cy="246" r="14"/><circle cx="690" cy="245" r="16"/><circle cx="696" cy="240" r="13"/><circle cx="653" cy="250" r="14"/><circle cx="640" cy="272" r="18"/><circle cx="655" cy="282" r="18"/><circle cx="668" cy="285" r="18"/><circle cx="682" cy="282" r="14"/><circle cx="645" cy="290" r="18"/><circle cx="628" cy="298" r="18"/><circle cx="620" cy="312" r="18"/><circle cx="613" cy="328" r="17"/><circle cx="625" cy="325" r="14"/><circle cx="606" cy="342" r="16"/><circle cx="622" cy="345" r="13"/><circle cx="655" cy="308" r="16"/><circle cx="665" cy="318" r="12"/><circle cx="660" cy="328" r="13"/><circle cx="660" cy="328" r="9"/><circle cx="690" cy="312" r="15"/><circle cx="693" cy="320" r="11"/><circle cx="701" cy="278" r="13"/><circle cx="680" cy="292" r="14"/><circle cx="675" cy="413" r="13"/><circle cx="690" cy="411" r="13"/><circle cx="634" cy="515" r="12"/><circle cx="644" cy="520" r="14"/><circle cx="650" cy="526" r="11"/><circle cx="640" cy="512" r="10"/><circle cx="636" cy="495" r="12"/><circle cx="614" cy="512" r="17"/><circle cx="614" cy="540" r="17"/><circle cx="537" cy="577" r="15"/><circle cx="579" cy="593" r="12"/><circle cx="568" cy="599" r="12"/><circle cx="574" cy="596" r="10"/><circle cx="614" cy="618" r="12"/><circle cx="668" cy="258" r="18"/><circle cx="648" cy="304" r="14"/>
            </g>
            <g fill-opacity=".3">
              <circle cx="537" cy="577" r="11"/><circle cx="675" cy="413" r="10"/><circle cx="690" cy="411" r="10"/><circle cx="612" cy="533" r="15"/><circle cx="612" cy="526" r="11"/><circle cx="615" cy="511" r="12"/><circle cx="612" cy="538" r="11"/>
              <circle cx="648" cy="261" r="12"/><circle cx="648" cy="261" r="10"/><circle cx="648" cy="261" r="9"/><circle cx="648" cy="261" r="9"/><circle cx="634" cy="282" r="13"/><circle cx="634" cy="282" r="12"/><circle cx="634" cy="282" r="11"/><circle cx="634" cy="281" r="10"/>
              <circle cx="688" cy="250" r="11"/><circle cx="650" cy="297" r="12"/><circle cx="650" cy="304" r="11"/><circle cx="681" cy="289" r="9"/><circle cx="701" cy="278" r="12"/><circle cx="701" cy="278" r="10"/><circle cx="620" cy="314" r="9"/><circle cx="692" cy="317" r="7"/><circle cx="657" cy="281" r="9"/><circle cx="579" cy="593" r="8"/>
            </g>
            <g fill-opacity=".62">
              <circle cx="664" cy="277" r="14"/><circle cx="667" cy="269" r="14"/><circle cx="673" cy="262" r="14"/><circle cx="678" cy="257" r="12"/><circle cx="665" cy="273" r="11"/>
            </g>
          </g>
        </g>

        <g class="city small">
          <text x="846" y="589" textLength="87" lengthAdjust="spacingAndGlyphs">Clifton</text>
          <text x="738" y="678" textLength="118" lengthAdjust="spacingAndGlyphs">Montclair</text>
          <text x="777" y="730" textLength="136" lengthAdjust="spacingAndGlyphs">Bloomfield</text>
          <text x="724" y="838" textLength="161" lengthAdjust="spacingAndGlyphs">East Orange</text>
          <text x="626" y="758">n</text>
          <text x="1554" y="310" textLength="141" lengthAdjust="spacingAndGlyphs">Eastchester</text>
          <text x="1765" y="287" textLength="108" lengthAdjust="spacingAndGlyphs">Harrison</text>
          <text x="1582" y="445" textLength="184" lengthAdjust="spacingAndGlyphs">New Rochelle</text>
          <text x="1919" y="577" textLength="124" lengthAdjust="spacingAndGlyphs">Glen Cove</text>
          <text x="648" y="1027" textLength="73" lengthAdjust="spacingAndGlyphs">Union</text>
          <text x="934" y="1105" textLength="115" lengthAdjust="spacingAndGlyphs">Bayonne</text>
          <text x="628" y="1406" textLength="89" lengthAdjust="spacingAndGlyphs">lbridge</text>
          <text x="632" y="1544" textLength="130" lengthAdjust="spacingAndGlyphs">rth Amboy</text>
          <text x="1909" y="947" textLength="142" lengthAdjust="spacingAndGlyphs">Garden City</text>
          <text x="1940" y="1003" textLength="143" lengthAdjust="spacingAndGlyphs">Hempstead</text>
          <text x="1739" y="1117" textLength="174" lengthAdjust="spacingAndGlyphs">Valley Stream</text>
          <text x="2030" y="1135" textLength="110" lengthAdjust="spacingAndGlyphs">Freeport</text>
          <text x="1857" y="1322" textLength="148" lengthAdjust="spacingAndGlyphs">Long Beach</text>
        </g>
        <g class="city mid">
          <text x="809" y="925" textLength="124" lengthAdjust="spacingAndGlyphs">Newark</text>
          <text x="1376" y="392" textLength="119" lengthAdjust="spacingAndGlyphs">Yonkers</text>
          <text x="987" y="945" textLength="159" lengthAdjust="spacingAndGlyphs">Jersey City</text>
          <text x="725" y="1119" textLength="134" lengthAdjust="spacingAndGlyphs">Elizabeth</text>
          <text x="2114" y="570" textLength="62" lengthAdjust="spacingAndGlyphs">Oyst</text>
        </g>
        <g class="city code">
          <text x="836" y="1069" textLength="49" lengthAdjust="spacingAndGlyphs">EWR</text>
          <text x="1650" y="1199" textLength="42" lengthAdjust="spacingAndGlyphs">JFK</text>
          <use href="#plane" x="860" y="1028"/><use href="#plane" x="1670" y="1159"/>
        </g>
        <g class="logo">
          <circle cx="665" cy="1556" r="19"/>
          <path class="ink" d="M655 1569c-2-13 0-27 13-27 7 0 11 5 11 11 0 12-12 16-24 16z"/>
          <path d="M667 1546l2 5 5 2-5 2-2 5-2-5-5-2 5-2z"/>
          <text x="690" y="1566" textLength="124" lengthAdjust="spacingAndGlyphs">mapbox</text>
        </g>
      </svg>
      <div class="legend">
        <div class="legend-title">Number of 311 Requests</div>
        <div class="legend-bar"></div>
        <div class="legend-ends"><span>0</span><span>200+</span></div>
      </div>
      <div class="credit"><span>© Mapbox © OpenStreetMap</span><b>Improve this map</b></div>
    </div>
  </section>

  <div class="charts">
    <section class="card line-card">
      <h2 class="head">The Number of 311 Service Requests</h2>
      <svg class="chart" viewBox="2258 262 1084 560" width="1084" height="560">
        <rect x="2628" y="298" width="86" height="30" fill="#3a77af"/><text x="2723" y="321" textLength="75">Closed</text>
        <rect x="2815" y="298" width="87" height="30" fill="#ef8536"/><text x="2911" y="321" textLength="57">Open</text>
        <path class="gl" d="M2343 345H3316M2343 399H3316M2343 454H3316M2343 508H3316M2343 562H3316M2343 616H3316M2343 671H3316M2343 725H3316M2363 345V725M2584 345V738M2703 345V738M2822 345V738M2942 345V738M3061 345V738M3180 345V738M3299 345V738"/>
        <path class="gl zero" d="M2465 345V738M2363 725H3316"/>
        <g text-anchor="end">
          <text x="2342" y="353">7000</text><text x="2342" y="407">6000</text><text x="2342" y="461">5000</text><text x="2342" y="516">4000</text><text x="2342" y="570">3000</text><text x="2342" y="624">2000</text><text x="2342" y="678">1000</text><text x="2342" y="732">0</text>
          <text transform="translate(2468 753) rotate(-18)">Jan 5, 2020</text><text transform="translate(2587 753) rotate(-18)">Jan 12, 2020</text><text transform="translate(2706 753) rotate(-18)">Jan 19, 2020</text><text transform="translate(2825 753) rotate(-18)">Jan 26, 2020</text><text transform="translate(2945 753) rotate(-18)">Feb 2, 2020</text><text transform="translate(3064 753) rotate(-18)">Feb 9, 2020</text><text transform="translate(3183 753) rotate(-18)">Feb 16, 2020</text><text transform="translate(3302 753) rotate(-18)">Feb 23, 2020</text>
        </g>
        <g fill="none" stroke-width="6">
          <path stroke="#ef8536" d="M2363 724.500H3036C3050 724.500 3064 724 3078 724C3131 704 3150 633 3197 633S3316 724.600 3316 724.600"/>
          <path stroke="#3a77af" d="M2363 518C2363 518 2432.500 467.700 2482 440S2551 398.600 2601 385C2646 372.600 2678.600 359.300 2720 375C2774 395.300 2786.500 443.900 2839 475C2881.700 500.200 2915.500 526.900 2958.500 516C3011 502.500 3034.400 406.300 3078 414C3130 423 3151.600 498.700 3197 558C3246.800 623 3316 724.600 3316 724.600"/>
        </g>
        <g class="dots" stroke="#ef8536"><circle cx="2363" cy="724.500" r="6"/><circle cx="2482" cy="724.500" r="6"/><circle cx="2601" cy="724.500" r="6"/><circle cx="2720" cy="724.500" r="6"/><circle cx="2839" cy="724.500" r="6"/><circle cx="2958.500" cy="724.500" r="6"/><circle cx="3078" cy="724" r="6"/><circle cx="3197" cy="633" r="6"/></g>
        <g class="dots" stroke="#3a77af"><circle cx="2363" cy="518" r="6"/><circle cx="2482" cy="440" r="6"/><circle cx="2601" cy="385" r="6"/><circle cx="2720" cy="375" r="6"/><circle cx="2839" cy="475" r="6"/><circle cx="2958.500" cy="516" r="6"/><circle cx="3078" cy="414" r="6"/><circle cx="3197" cy="558" r="6"/><circle cx="3316" cy="724.600" r="6"/></g>
      </svg>
    </section>
    <section class="card bar-card">
      <h2 class="head">The Number of 311 Service Requests by Borough</h2>
      <svg class="chart" viewBox="2258 966 1084 560" width="1084" height="560">
        <path class="gl" d="M2586.500 999V1422M2686 999V1422M2785.500 999V1422M2885 999V1422M2984.500 999V1422M3084 999V1422M3183.500 999V1422M3283 999V1422M2467 1080H3283M2467 1160H3283M2467 1241H3283M2467 1321H3283M2467 1402H3283M2467 999H3283"/>
        <path class="gl zero" d="M2487 999H3283"/><path class="gl" d="M2487 1402H3283"/>
        <rect x="2487" y="1011" width="748" height="58" fill="#d3ef82"/><rect x="2487" y="1091" width="564.500" height="58" fill="#8ed08f"/><rect x="2487" y="1172" width="425" height="58" fill="#5aac95"/><rect x="2487" y="1252" width="269" height="58" fill="#45868f"/><rect x="2487" y="1333" width="20" height="58" fill="#475e79"/>
        <path class="gl zero" d="M2487 999V1422"/>
        <g text-anchor="end"><text x="2467" y="1047" textLength="83">BRONX</text><text x="2467" y="1128" textLength="129">BROOKLYN</text><text x="2467" y="1208" textLength="142">MANHATTAN</text><text x="2467" y="1289" textLength="98">QUEENS</text><text x="2467" y="1369" textLength="178">STATEN ISLAND</text></g>
        <g text-anchor="middle"><text x="2487" y="1445">0</text><text x="2586.500" y="1445">2000</text><text x="2686" y="1445">4000</text><text x="2785.500" y="1445">6000</text><text x="2885" y="1445">8000</text><text x="2984.500" y="1445">10000</text><text x="3084" y="1445">12000</text><text x="3183.500" y="1445">14000</text><text x="3283" y="1445">16000</text><text x="2885" y="1492" textLength="315">The Number of 311 Requests</text></g>
      </svg>
    </section>
  </div>
</main>
</body>
</html>
```

FILE: styles.css
```css
* { box-sizing: border-box; }
body {
  margin: 0;
  min-height: 1793px;
  background: #f0f1f5;
  color: #595959;
  font: 28px/44px Inter, "Noto Sans", sans-serif;
  letter-spacing: -0.8px;
}
h2, h3, h4, p { margin: 0; }
svg { display: block; }

.topbar {
  display: flex;
  align-items: center;
  height: 121px;
  padding: 0 0 6px 64px;
  background: #021426;
  color: #a6adb4;
}
.brand { width: 416px; color: #fff; white-space: nowrap; font-weight: 500; letter-spacing: -0.28px; }
.nav { display: flex; align-items: center; gap: 27px; letter-spacing: -1.1px; }
.nav-github { width: 222px; }
.nav-data { gap: 30px; }

.board {
  display: grid;
  grid-template-columns: 528px 1648px 1088px;
  gap: 32px;
  align-items: start;
  padding: 24px 16px;
}
.card { background: #fff; border: 2px solid #efeff0; border-radius: 4px; }
.side, .charts { display: flex; flex-direction: column; }
.charts { gap: 25px; }
.head {
  height: 115px;
  padding: 0 48px;
  border-bottom: 2px solid #f0f0f0;
  color: #262626;
  font-size: 32px;
  font-weight: 500;
  line-height: 115px;
  letter-spacing: -0.96px;
  white-space: nowrap;
}

.intro { height: 634px; }
.small-head {
  height: 78px;
  padding-left: 24px;
  border-bottom: 2px solid #f0f0f0;
  color: #262626;
  font-size: 28px;
  font-weight: 500;
  line-height: 77px;
  letter-spacing: -0.6px;
}
.intro-body { padding: 10px 0 0 20px; white-space: nowrap; }
.intro-body p { letter-spacing: -1.02px; }
.intro-body h4 { margin: 8px 0 2px; font-size: 28px; font-weight: 700; }
.intro-body u { text-decoration-thickness: 2px; text-underline-offset: 4px; }

.filters { height: 864px; padding: 33px 20px 0; margin-top: 1px; }
.divider {
  display: flex;
  align-items: center;
  height: 52px;
  margin: 0 -16px;
  color: #262626;
  font-size: 32px;
  font-weight: 500;
  letter-spacing: -1.22px;
  white-space: nowrap;
}
.divider::before, .divider::after { content: ""; height: 2px; background: #f0f0f0; }
.divider::before { width: 8px; }
.divider::after { flex: 1; }
.divider span { padding: 0 32px 0 33px; }
.divider-line { margin-top: 46px; }
.divider-line::before { width: 4px; }
.filters label { display: block; margin-top: 33px; margin-bottom: 9px; height: 44px; white-space: nowrap; letter-spacing: -0.72px; }
.divider + label { margin-top: 48px; }
.filters b { font-weight: 600; }
.field {
  display: flex;
  align-items: center;
  justify-content: space-between;
  height: 63px;
  padding: 0 21px 0 22px;
  border: 2px solid #d9d9d9;
  border-radius: 4px;
}
.dates { justify-content: flex-start; letter-spacing: -2.05px; font-variant-numeric: tabular-nums; }
.dates span:first-child { width: 189px; }
.dates svg + span { margin-left: 19px; }
.dates .cal { margin-left: auto; }
.toggle { display: flex; }
.opt {
  height: 63px;
  width: 92px;
  padding: 0;
  border: 2px solid #d9d9d9;
  border-right: 0;
  border-radius: 4px 0 0 4px;
  background: #fff;
  color: #595959;
  font: inherit;
  letter-spacing: -0.7px;
}
.opt.on { width: 180px; border: 2px solid #4091f7; border-radius: 0 4px 4px 0; color: #4091f7; }

.map-card { height: 1468px; }
.map { position: relative; width: 1540px; height: 1310px; margin: 19px 0 0 52px; overflow: hidden; }
.land { fill: #343332; }
.park, .park path { fill: #333532; }
.water { fill: #191a1a; }
.thread { fill: none; stroke: #191a1a; stroke-width: 6; }
.thread.wide { stroke-width: 9; }
.harlem { fill: none; stroke: #191a1a; stroke-width: 46; }
.casing, .thick, .thin { fill: none; stroke-linejoin: round; stroke-linecap: round; }
#major path, #minor path { vector-effect: non-scaling-stroke; }
.casing { stroke: #2a2a29; stroke-width: 8; }
.thick { stroke: #454545; stroke-width: 4.6; }
.thin { stroke: #414141; stroke-width: 2.4; }
.dim { stroke: #3f3f3f; stroke-width: 2; }
.cell { fill: none; stroke: #444; stroke-width: 1.6; }
.border { fill: none; stroke: #6e6e6e; stroke-width: 2.2; stroke-dasharray: 18 5; }
.city { font-family: Roboto, "Noto Sans", sans-serif; letter-spacing: 0; fill: #c2c2c2; paint-order: stroke; stroke: #262626; stroke-width: 4; stroke-linejoin: round; }
.small { font-size: 31px; }
.mid { font-size: 32px; font-weight: 500; fill: #e6e6e6; }
.big { font-size: 36px; font-weight: 500; fill: #e6e6e6; }
.code { font-size: 25px; font-weight: 500; fill: #e2e2e2; }
.logo { fill: #f0f0f0; font: 700 34px Inter, sans-serif; letter-spacing: 0; }
.logo .ink { fill: #1c1c1c; }

.legend {
  position: absolute;
  left: 20px;
  top: 20px;
  width: 480px;
  height: 178px;
  padding: 18px 32px 0 40px;
  background: #fff;
}
.legend-title { color: #262626; font-weight: 500; letter-spacing: -0.22px; white-space: nowrap; }
.legend-bar { width: 400px; height: 24px; margin-top: 18px; background: linear-gradient(90deg, #79aacf, #d3e4f0 25%, #f6dac8 50%, #e38c6a 75%, #f5c976); }
.legend-ends { display: flex; justify-content: space-between; margin-top: 10px; letter-spacing: -0.5px; }
.credit {
  position: absolute;
  right: 0;
  bottom: 0;
  display: flex;
  gap: 10px;
  height: 40px;
  padding: 0 10px 0 9px;
  background: #8b8c8c;
  color: #252626;
  font: 24px/40px "Liberation Sans", Arial, sans-serif;
  letter-spacing: 0;
  white-space: nowrap;
}
.credit span { letter-spacing: 0.33px; }

.chart { font: 24px "Liberation Sans", Arial, sans-serif; letter-spacing: 0; fill: #666; }
.gl { fill: none; stroke: #000; stroke-opacity: .1; stroke-width: 2; }
.gl.zero { stroke-opacity: .25; }
.dots { fill: rgba(0, 0, 0, .1); stroke-width: 2; }
```
